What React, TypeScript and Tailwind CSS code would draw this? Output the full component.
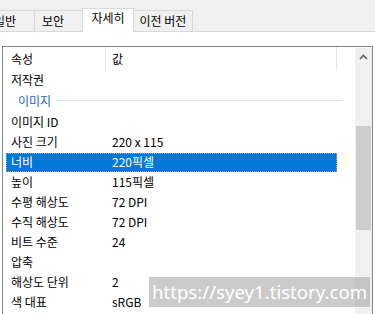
import React from "react";

const rows: { label: string; value?: string; selected?: boolean }[] = [
  { label: "이미지 ID" },
  { label: "사진 크기", value: "220 x 115" },
  { label: "너비", value: "220픽셀", selected: true },
  { label: "높이", value: "115픽셀" },
  { label: "수평 해상도", value: "72 DPI" },
  { label: "수직 해상도", value: "72 DPI" },
  { label: "비트 수준", value: "24" },
  { label: "압축" },
  { label: "해상도 단위", value: "2" },
  { label: "색 대표", value: "sRGB" },
];

export default function App() {
  return (
    <div
      className="relative w-[375px] h-[314px] overflow-hidden bg-white text-[12px] text-black"
      style={{ fontFamily: '"Noto Sans CJK KR", "Noto Sans", sans-serif' }}
    >
      {/* tab strip */}
      <div className="h-[32px] bg-[#f0f0f0] border-b border-[#d9d9d9] flex items-end">
        <div className="ml-[-14px] w-[49px] h-[21px] border-t border-r border-[#d9d9d9] flex items-center justify-end pr-[18px] leading-none">
          일반
        </div>
        <div className="w-[47px] h-[21px] border-t border-[#d9d9d9] flex items-center pl-[7px] leading-none">
          보안
        </div>
        <div className="w-[52px] h-[24px] mb-[-1px] bg-white border-t border-l border-r border-[#d9d9d9] flex items-start pt-[2px] justify-center leading-none">
          <span className="mt-[1px]">자세히</span>
        </div>
        <div className="w-[59px] h-[21px] border-t border-r border-[#d9d9d9] flex items-center justify-center leading-none">
          이전 버전
        </div>
      </div>

      {/* list */}
      <div className="mt-[14px] ml-[2px] w-[371px] h-[300px] border-t border-l border-r border-[#828790] flex">
        <div className="flex-1 flex flex-col">
          <div className="h-[24px] flex items-center relative shrink-0">
            <div className="w-[102px] pl-[8px]">속성</div>
            <div className="w-[1px] h-[24px] bg-[#e5e5e5]" />
            <div className="pl-[6px] w-[230px]">값</div>
            <div className="w-[1px] h-[24px] bg-[#e5e5e5]" />
          </div>
          <div className="h-[18px] flex items-center pl-[8px] shrink-0">저작권</div>
          <div className="h-[23px] flex items-center shrink-0 pl-[15px]">
            <span className="text-[#2a5fcf]">이미지</span>
            <div className="ml-[5px] w-[286px] h-[1px] bg-[#dadce6]" />
          </div>
          {rows.map((r) => (
            <div key={r.label} className="h-[20px] flex items-center shrink-0">
              <div
                className={
                  r.selected
                    ? "ml-[3px] w-[331px] h-[19px] flex items-center bg-[#0078d7] text-white border border-dotted border-[#f39a2b]"
                    : "ml-[3px] w-[331px] h-[19px] flex items-center border border-transparent"
                }
              >
                <div className="w-[102px] pl-[4px]">{r.label}</div>
                <div className="pl-[3px]">{r.value ?? ""}</div>
              </div>
            </div>
          ))}
        </div>
        {/* scrollbar */}
        <div className="w-[17px] mt-[1px] bg-[#f0f0f0] flex flex-col items-center">
          <div className="h-[17px] w-full flex items-center justify-center">
            <svg width="9" height="6" viewBox="0 0 9 6">
              <path d="M1 5 L4.5 1.5 L8 5" stroke="#606060" strokeWidth="1.6" fill="none" />
            </svg>
          </div>
          <div className="mt-[61px] w-[15px] h-[104px] bg-[#cdcdcd]" />
        </div>
      </div>

      {/* watermark */}
      <div
        className="absolute left-[149px] top-[277px] w-[221px] h-[30px] bg-[#a8a8a8]/60 text-white text-[18.6px] leading-none flex items-center pl-[3px] whitespace-nowrap"
        style={{ fontFamily: '"Noto Sans", sans-serif' }}
      >
        https://syey1.tistory.com
      </div>
    </div>
  );
}
